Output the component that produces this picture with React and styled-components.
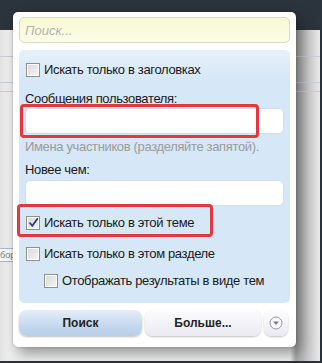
import React from "react";
import styled, { createGlobalStyle } from "styled-components";

const GlobalStyle = createGlobalStyle`
  html, body {
    margin: 0;
    padding: 0;
    background: #2a3139;
  }
  * {
    box-sizing: border-box;
  }
`;

const SCPage = styled.div`
  position: relative;
  width: 322px;
  height: 363px;
  overflow: hidden;
  background: #2a3139;
  font-family: "Liberation Sans", Arial, sans-serif;
`;

const SCTopBar = styled.div`
  height: 30px;
  background: #2b343d;
`;

const SCBackdrop = styled.div`
  width: 320px;
  height: 331px;
  background: linear-gradient(to right, #e2e2e2 0, #eeeeee 8px, #f2f2f2 40px, #f2f2f2 290px, #a9a9a9 296px, #e9e9e9 320px);
  padding-top: 26px;
`;

const SCBackRow = styled.div`
  height: ${(p) => p.h}px;
  border-bottom: 1px solid #c9ced4;
`;

const SCBackTab = styled.div`
  margin-top: 156px;
  width: 16px;
  height: 14px;
  border: 1px solid #a9b8c8;
  border-left: none;
  background: #f6f8fb;
  font-size: 9px;
  line-height: 12px;
  color: #6d7c8d;
  white-space: nowrap;
`;

const SCPopup = styled.div`
  position: absolute;
  left: 13px;
  top: 12px;
  width: 283px;
  height: 335px;
  background: #ffffff;
  border-radius: 5px;
  padding: 5px 6px 0 6px;
  box-shadow: 5px 7px 14px rgba(0, 0, 0, 0.38), 0 0 3px rgba(0, 0, 0, 0.2);
  display: flex;
  flex-direction: column;
  gap: 7px;
`;

const SCSearch = styled.input`
  width: 100%;
  height: 26px;
  border: 1px solid #dadbc6;
  border-radius: 5px;
  background: linear-gradient(#f6f9d0, #fcfde8);
  padding: 0 5px;
  font-family: inherit;
  font-size: 13px;
  outline: none;
  &::placeholder {
    color: #b2b2b2;
    font-style: italic;
  }
`;

const SCPanel = styled.div`
  height: 253px;
  border-radius: 5px;
  background: linear-gradient(#e6f0f9 0, #d6e7f7 32px, #d6e7f7 100%);
  padding: 12px 5px 0 6px;
  display: flex;
  flex-direction: column;
  font-size: 13px;
  letter-spacing: -0.35px;
  color: #1a1a1a;
`;

const SCCheckRow = styled.label`
  display: flex;
  align-items: center;
  gap: 4px;
  height: 15px;
  margin-left: ${(p) => p.indent || 1}px;
  margin-bottom: ${(p) => p.mb || 0}px;
  white-space: nowrap;
`;

const SCBox = styled.span`
  width: 14px;
  height: 14px;
  flex: none;
  border: 1px solid #8e8f8f;
  background: linear-gradient(135deg, #d8d8d8, #f6f6f6);
  box-shadow: inset 0 0 0 1px #ffffff;
  display: flex;
  align-items: center;
  justify-content: center;
`;

const SCLabel = styled.div`
  height: 15px;
  line-height: 15px;
  margin-bottom: ${(p) => p.mb || 0}px;
`;

const SCHint = styled.div`
  color: #9b9b9b;
  height: 14px;
  line-height: 14px;
  margin-top: 6px;
  margin-bottom: 8px;
`;

const SCField = styled.input`
  display: block;
  width: 259px;
  height: 26px;
  border: 1px solid #d2dce6;
  border-radius: 5px;
  background: #ffffff;
  margin-bottom: ${(p) => p.mb || 0}px;
  outline: none;
`;

const SCButtons = styled.div`
  display: flex;
  gap: 3px;
  height: 26px;
`;

const SCButton = styled.button`
  width: ${(p) => p.w}px;
  height: 26px;
  border: none;
  border-radius: 8px;
  font-family: inherit;
  font-size: 12px;
  font-weight: bold;
  color: #222222;
  background: ${(p) =>
    p.primary
      ? "linear-gradient(#e6eef7, #c4d8ee 60%, #b6cfe8)"
      : "linear-gradient(#fcfcfe, #ebe9f2)"};
  box-shadow: 0 1px 2px rgba(0, 0, 0, 0.25);
  padding: 0;
  display: flex;
  align-items: center;
  justify-content: center;
`;

const SCHighlight = styled.div`
  position: absolute;
  left: ${(p) => p.x}px;
  top: ${(p) => p.y}px;
  width: ${(p) => p.w}px;
  height: ${(p) => p.h}px;
  border: 3px solid #e2393c;
  border-radius: 4px;
  pointer-events: none;
`;

const Check = ({ checked }) => (
  <SCBox>
    {checked && (
      <svg width="11" height="11" viewBox="0 0 11 11">
        <path d="M1.5 5.5 L4.3 8.8 L9.8 1.2" fill="none" stroke="#2b3f86" strokeWidth="1.8" />
      </svg>
    )}
  </SCBox>
);

const App = () => {
  return (
    <>
      <GlobalStyle />
      <SCPage>
        <SCTopBar />
        <SCBackdrop>
          <SCBackRow h={1} />
          <SCBackRow h={26} />
          <SCBackRow h={9} />
          <SCBackTab>бор</SCBackTab>
        </SCBackdrop>
        <SCPopup>
          <SCSearch placeholder="Поиск..." />
          <SCPanel>
            <SCCheckRow mb={14}>
              <Check />
              Искать только в заголовках
            </SCCheckRow>
            <SCLabel mb={2}>Сообщения пользователя:</SCLabel>
            <SCField />
            <SCHint>Имена участников (разделяйте запятой).</SCHint>
            <SCLabel mb={3}>Новее чем:</SCLabel>
            <SCField mb={9} />
            <SCCheckRow mb={16}>
              <Check checked />
              Искать только в этой теме
            </SCCheckRow>
            <SCCheckRow mb={12}>
              <Check />
              Искать только в этом разделе
            </SCCheckRow>
            <SCCheckRow indent={19}>
              <Check />
              Отображать результаты в виде тем
            </SCCheckRow>
          </SCPanel>
          <SCButtons>
            <SCButton primary w={123}>Поиск</SCButton>
            <SCButton w={116}>Больше...</SCButton>
            <SCButton w={24}>
              <svg width="14" height="14" viewBox="0 0 14 14">
                <circle cx="7" cy="7" r="6" fill="#f7f7fa" stroke="#9a9aa2" strokeWidth="1" />
                <path d="M4 5.5 H10 L7 9 Z" fill="#7c7c86" />
              </svg>
            </SCButton>
          </SCButtons>
          <SCHighlight x={7} y={92} w={239} h={34} />
          <SCHighlight x={4} y={192} w={196} h={33} />
        </SCPopup>
      </SCPage>
    </>
  );
};

export default App;
